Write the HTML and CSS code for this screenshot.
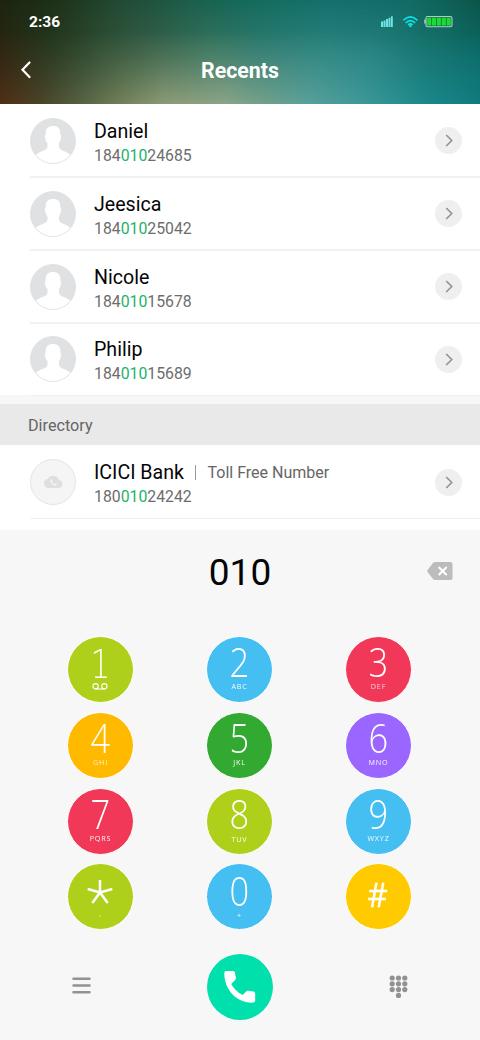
FILE: index.html
```html
<!DOCTYPE html>
<html lang="en">
<head>
<meta charset="utf-8">
<title>Recents</title>
<link rel="stylesheet" href="styles.css">
</head>
<body>
<svg class="defs" width="0" height="0">
  <symbol id="person" viewBox="0 0 46 46">
    <circle cx="23" cy="23" r="22.5" fill="#dfe1e3"/>
    <path d="M5.500 37C9 33 17 33 17.500 29V25C15.500 23.500 15.500 21 15 19.500C14.500 18 15 17 15.800 17C15 11 18 8 23 8S31 11 30.200 17C31 17 31.500 18 31 19.500C30.500 21 30.500 23.500 29 25V29C29.500 33 37 33 40.500 37A22.500 22.500 0 0 1 5.500 37Z" fill="#fff"/>
    <circle cx="23" cy="23" r="22.500" fill="none" stroke="#dcdee0" stroke-width=".8"/>
  </symbol>
  <symbol id="next" viewBox="0 0 27 27">
    <circle cx="13.500" cy="13.500" r="13.500" fill="#efefef"/>
    <path d="M11.200 8l5.500 5.500-5.500 5.500" fill="none" stroke="#949494" stroke-width="1.700"/>
  </symbol>
</svg>
<header class="header">
  <div class="status">
    <span class="time">2:36</span>
    <svg class="indicators" width="74" height="16" viewBox="0 0 74 16">
      <g fill="#6ee3e6"><path d="M1 6.500h2V12H1zM3.500 5.500h2V12h-2zM6 4h2v8H6zM8.500 2.800h2V12h-2zM11 1.200h1.800V12H11z"/></g>
      <g fill="none" stroke="#08e5ea" stroke-width="1.600"><path d="M23.300 5.300q7-6.800 14.200 0M25.700 7.800q4.700-4.500 9.400 0M28.100 10q2.300-2.300 4.600 0"/></g>
      <circle cx="30.400" cy="11" r="1.300" fill="#08e5ea"/>
      <rect x="46" y="1.500" width="26" height="10.200" rx="1.500" fill="#13774b" stroke="#b5c9c7" stroke-width="1.100"/>
      <path d="M45 4.500v4" stroke="#b5c9c7" stroke-width="1.500"/>
      <path d="M47.200 2.700h4v7.800h-4zM52 2.700h4v7.800h-4zM56.900 2.700h4v7.800h-4zM61.800 2.700h4v7.800h-4zM66.700 2.700h4v7.800h-4z" fill="#19dc35"/>
    </svg>
  </div>
  <div class="titlebar">
    <svg width="12" height="20" viewBox="0 0 12 20"><path d="M9.500 2.500L2.500 9.800l7 7.300" fill="none" stroke="#fff" stroke-width="2.200" stroke-linecap="round"/></svg>
    <h1 class="title">Recents</h1>
  </div>
</header>
<main>
  <ul class="list">
    <li class="row"><svg class="avatar"><use href="#person"/></svg><div class="info"><div class="name">Daniel</div><div class="number">184<b>010</b>24685</div></div><svg class="next"><use href="#next"/></svg></li>
    <li class="row"><svg class="avatar"><use href="#person"/></svg><div class="info"><div class="name">Jeesica</div><div class="number">184<b>010</b>25042</div></div><svg class="next"><use href="#next"/></svg></li>
    <li class="row"><svg class="avatar"><use href="#person"/></svg><div class="info"><div class="name">Nicole</div><div class="number">184<b>010</b>15678</div></div><svg class="next"><use href="#next"/></svg></li>
    <li class="row"><svg class="avatar"><use href="#person"/></svg><div class="info"><div class="name">Philip</div><div class="number">184<b>010</b>15689</div></div><svg class="next"><use href="#next"/></svg></li>
  </ul>
  <h2 class="section">Directory</h2>
  <ul class="list directory">
    <li class="row">
      <svg class="avatar" viewBox="0 0 46 46">
        <circle cx="23" cy="23" r="22.500" fill="#f5f5f5" stroke="#dedede" stroke-width=".8"/>
        <path d="M18 29a4.600 4.600 0 0 1-.3-9.100a6.200 6.200 0 0 1 11.400 1.200a4 4 0 0 1-.3 7.900z" fill="#dedfe0"/>
        <path d="M20.500 20.500l1.400.1.500 1.700-.7.700q.8 1.500 2.300 2.300l.8-.8 1.800.6-.1 1.300c-3 .6-6.600-2.500-6-5.900z" fill="#f7f7f7"/>
      </svg>
      <div class="info"><div class="name">ICICI Bank<i class="bar"></i><span class="tag">Toll Free Number</span></div><div class="number">180<b>010</b>24242</div></div>
      <svg class="next"><use href="#next"/></svg>
    </li>
  </ul>
</main>
<section class="dialer">
  <div class="entry">
    <span></span>
    <output class="dialed">010</output>
    <svg class="erase" width="26" height="18" viewBox="0 0 26 18"><path d="M8 0h15.500q2 0 2 2v14q0 2-2 2H8q-1.200 0-2-1L.6 10q-.8-1 0-2L6 1q.8-1 2-1z" fill="#bcbcbc"/><path d="M11.700 5l8 8M19.700 5l-8 8" stroke="#fff" stroke-width="2"/></svg>
  </div>
  <div class="keys">
    <button class="key lime"><span class="digit one">1</span><svg class="voicemail" width="16" height="7" viewBox="0 0 16 7"><g fill="none" stroke="#fff" stroke-width="1.100"><circle cx="3.600" cy="3.200" r="2.600"/><circle cx="12.400" cy="3.200" r="2.600"/><path d="M3 6h10"/></g></svg></button>
    <button class="key blue"><span class="digit">2</span><span class="letters">ABC</span></button>
    <button class="key red"><span class="digit">3</span><span class="letters faint">DEF</span></button>
    <button class="key orange"><span class="digit">4</span><span class="letters faint">GHI</span></button>
    <button class="key green"><span class="digit">5</span><span class="letters">JKL</span></button>
    <button class="key purple"><span class="digit">6</span><span class="letters">MNO</span></button>
    <button class="key red"><span class="digit">7</span><span class="letters">PQRS</span></button>
    <button class="key lime"><span class="digit">8</span><span class="letters low">TUV</span></button>
    <button class="key blue"><span class="digit">9</span><span class="letters">WXYZ</span></button>
    <button class="key lime" aria-label="star"><svg class="star" width="26" height="26" viewBox="0 0 26 26"><path d="M13 13.500V1M13 13.500L.7 10M13 13.500l12.300-3.500M13 13.500L5.300 24M13 13.500l7.700 10.500" stroke="#fff" stroke-width="2.500"/></svg><span class="letters dot">,</span></button>
    <button class="key blue"><span class="digit zero">0</span><span class="letters plus">+</span></button>
    <button class="key yellow"><span class="hash">#</span></button>
  </div>
  <div class="actions">
    <svg class="menu" width="19" height="17" viewBox="0 0 19 17"><path d="M1.500 1.800h16M1.500 8.500h16M1.500 15.200h16" stroke="#929292" stroke-width="2.500" stroke-linecap="round"/></svg>
    <svg class="call" width="66" height="66" viewBox="0 0 66 66"><circle cx="33" cy="33" r="33" fill="#00e0ac"/><path d="M19 17h7.200q1.500 0 1.700 1.600l1 5.200q.2 1.300-.7 2.200l-4 4Q28 37 35.500 41l4-3.700q.7-.7 1.800-.5l5.300.8q1.600.2 1.600 1.800v7.200q0 2-2 2C30 49.500 17.300 36 17.300 19q0-2 1.700-2z" fill="#fff"/></svg>
    <svg width="19" height="24" viewBox="0 0 19 24"><g fill="#929292"><circle cx="3.200" cy="3" r="2.600"/><circle cx="9.500" cy="3" r="2.600"/><circle cx="15.800" cy="3" r="2.600"/><circle cx="3.200" cy="8.800" r="2.600"/><circle cx="9.500" cy="8.800" r="2.600"/><circle cx="15.800" cy="8.800" r="2.600"/><circle cx="3.200" cy="14.600" r="2.600"/><circle cx="9.500" cy="14.600" r="2.600"/><circle cx="15.800" cy="14.600" r="2.600"/><circle cx="9.500" cy="20.400" r="2.600"/></g></svg>
  </div>
</section>
</body>
</html>
```
FILE: styles.css
```css
* { box-sizing: border-box; }
body { margin: 0; width: 480px; height: 1040px; overflow: hidden; background: #f7f7f7; font-family: Roboto, sans-serif; color: #050505; }
.defs { position: absolute; }
svg { display: block; flex: none; }
ul { list-style: none; margin: 0; padding: 0; }
.header { position: relative; height: 104px; color: #fff; isolation: isolate;
  background: linear-gradient(90deg, #1c2410 0, #1e3319 60px, #224a34 120px, #1b5e4b 190px, #146b5c 250px, #15706c 330px, #126b66 410px, #0c5549 480px); }
.header::before, .header::after { content: ""; position: absolute; inset: 0; z-index: -1; }
.header::before {
  background: linear-gradient(90deg, #2b2612 0, #253820 50px, #2f4f35 100px, #386048 150px, #397660 210px, #307c72 260px, #2d8480 320px, #27827f 370px, #19756f 420px, #0c6a66 480px);
  mask-image: linear-gradient(transparent, rgba(0, 0, 0, .4) 20%, #000 55%); }
.header::after {
  background: linear-gradient(90deg, #502d15 0, #4a4428 40px, #566141 80px, #718059 120px, #8b9b77 165px, #8aa487 225px, #70a08c 265px, #58a09a 310px, #449a98 350px, #2e9293 390px, #1b8689 430px, #117b7e 480px);
  mask-image: linear-gradient(transparent 30%, rgba(0, 0, 0, .25) 55%, #000); }
.status { display: flex; justify-content: space-between; padding: 13px 26px 0 29px; height: 48px; }
.time { font-weight: 700; font-size: 15.500px; line-height: 19px; }
.indicators { margin-top: 2px; }
.titlebar { display: grid; grid-template-columns: 20px 1fr 20px; align-items: center; padding: 0 20px; height: 44px; }
.title { margin: 1px 0 0; text-align: center; font-size: 21.300px; line-height: 26px; font-weight: 700; }
.list { background: #fff; }
.row { display: flex; align-items: center; height: 72.850px; padding: 1px 18px 0 30px; position: relative; }
.row::after { content: ""; position: absolute; left: 30px; right: 0; bottom: -1px; height: 1.500px; background: #f1f1f1; }
.avatar { width: 46px; height: 46px; }
.info { flex: 1; margin-left: 18px; padding-top: 6px; }
.name { display: flex; align-items: center; font-size: 19.600px; line-height: 24px; }
.number { font-size: 15.800px; line-height: 24px; color: #6d6d6d; }
.directory .info { padding-top: 5px; }
.number b { font-weight: 400; color: #1bb46a; }
.next { width: 27px; height: 27px; }
.section { margin: 9px 0 0; height: 41px; padding: 2px 28px 0; background: #e9e9e9; color: #666; font-weight: 400; font-size: 16.200px; line-height: 40px; }
.directory { height: 85px; }
.bar { width: 1.500px; height: 15px; margin: 0 11px; background: #999; }
.tag { font-size: 16px; color: #666; }
.entry { display: grid; grid-template-columns: 100px 1fr 100px; align-items: center; height: 83px; padding: 2px 27px 0; }
.dialed { text-align: center; font-size: 37px; line-height: 40px; }
.erase { justify-self: end; margin-top: -4px; }
.keys { display: grid; grid-template-columns: repeat(3, 65px); justify-content: center; column-gap: 74px; row-gap: 10.650px; padding: 24px 3px 0 1px; }
.key { display: flex; flex-direction: column; align-items: center; width: 67px; height: 67px; margin: -1px; padding: 5px 0 0; border: 1px solid #fff; border-radius: 50%; color: #fff; }
.digit { font: 300 40px/39px "Open Sans", sans-serif; transform: scaleX(.86); height: 41px; }
.one { font-family: "DejaVu Sans Light", "DejaVu Sans", sans-serif; font-weight: 200; font-size: 39px; line-height: 46px; transform: scaleX(.8); }
.zero { line-height: 43px; }
.letters { font: 400 7.200px/9px "Open Sans", sans-serif; letter-spacing: .8px; margin: -1px -1px 0 0; opacity: .95; }
.low { margin-top: 0; }
.plus { margin-top: 1px; }
.dot { margin-top: 4px; }
.faint { opacity: .75; }
.star { margin-top: 10px; }
.hash { font: 400 33px/44px "Open Sans", sans-serif; margin-top: 4px; transform: scaleX(.95); -webkit-text-stroke: .4px #fff; }
.lime { background: #afd01b; }
.blue { background: #45bef2; }
.red { background: #f23859; }
.orange { background: #ffba00; }
.green { background: #32aa31; }
.purple { background: #9a66ff; }
.yellow { background: #ffcb00; }
.actions { display: flex; align-items: center; justify-content: space-between; padding: 25px 72px 0; }
.menu { margin-top: -4px; }
```
